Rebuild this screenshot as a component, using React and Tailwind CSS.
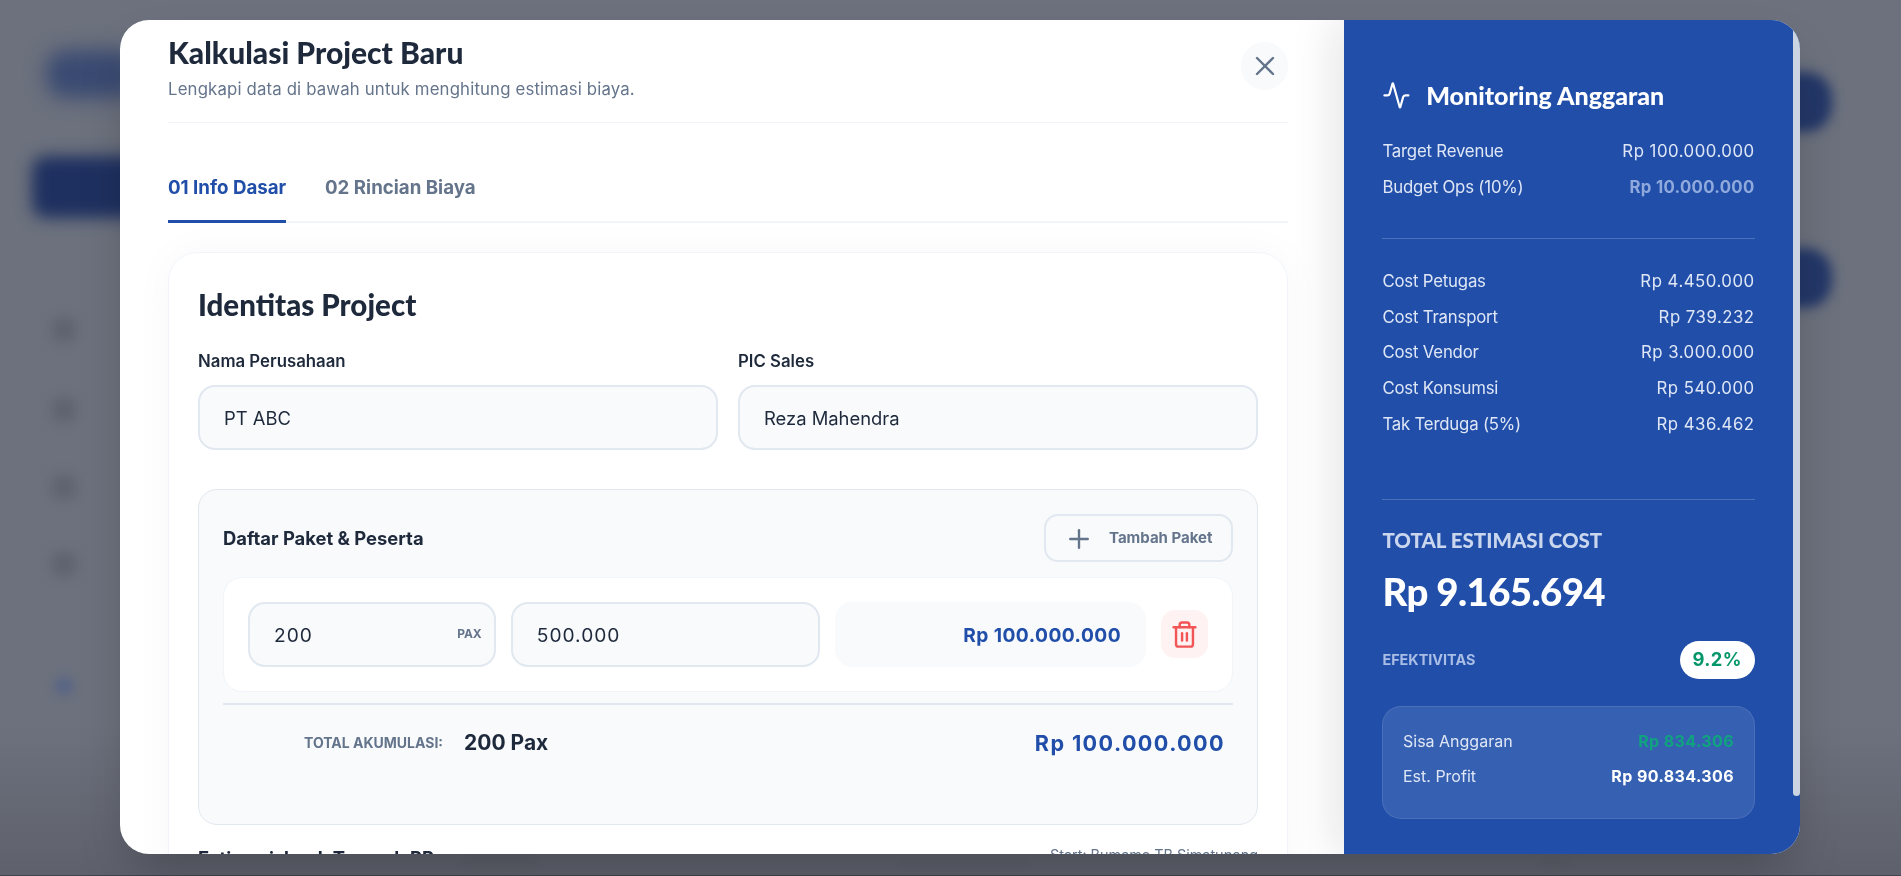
import React from "react";
import { Activity, Plus, Trash2, X } from "lucide-react";

const heading = "[font-family:Lato,sans-serif]";

const budgetRows = [
  { label: "Target Revenue", value: "Rp 100.000.000" },
  { label: "Budget Ops (10%)", value: "Rp 10.000.000", muted: true },
];

const costRows = [
  { label: "Cost Petugas", value: "Rp 4.450.000" },
  { label: "Cost Transport", value: "Rp 739.232" },
  { label: "Cost Vendor", value: "Rp 3.000.000" },
  { label: "Cost Konsumsi", value: "Rp 540.000" },
  { label: "Tak Terduga (5%)", value: "Rp 436.462" },
];

const SummaryRow = ({ label, value, muted }) => (
  <div className="flex items-center justify-between text-[16.8px] leading-[24px] text-[#dfe7f6]">
    <span className="tracking-[-0.2px]">{label}</span>
    <span className={muted ? "font-bold tracking-[0.3px] text-[#8fa9dd]" : "tracking-[0.5px]"}>{value}</span>
  </div>
);

const Field = ({ label, value }) => (
  <div className="flex-1">
    <label className="block text-[16.8px] font-semibold leading-[20px] text-[#1e293b]">{label}</label>
    <div className="mt-[14px] flex h-[65.4px] items-center rounded-[17px] border-2 border-[#e2e8f0] bg-[#f8fafc] px-[24px] pt-[2px] text-[18.4px] text-[#1e293b]">
      {value}
    </div>
  </div>
);

const Backdrop = () => (
  <div className="absolute inset-0 overflow-hidden bg-[#6c717d]">
    <div className="absolute left-[46px] top-[50px] h-[48px] w-[90px] rounded-[20px] bg-[#3a4a72] blur-[10px]" />
    <div className="absolute left-[32px] top-[156px] h-[62px] w-[120px] rounded-[14px] bg-[#1e3060] blur-[8px]" />
    <div className="absolute left-[52px] top-[318px] h-[24px] w-[24px] rounded-md bg-[#5f636f] blur-[6px]" />
    <div className="absolute left-[52px] top-[398px] h-[24px] w-[24px] rounded-md bg-[#5f636f] blur-[6px]" />
    <div className="absolute left-[52px] top-[475px] h-[24px] w-[24px] rounded-md bg-[#5f636f] blur-[6px]" />
    <div className="absolute left-[52px] top-[552px] h-[24px] w-[24px] rounded-md bg-[#5f636f] blur-[6px]" />
    <div className="absolute left-[54px] top-[676px] h-[20px] w-[20px] rounded-full bg-[#5a6685] blur-[4px]" />
    <div className="absolute left-[1760px] top-[72px] h-[60px] w-[72px] rounded-[26px] bg-[#233768] blur-[6px]" />
    <div className="absolute left-[1760px] top-[248px] h-[60px] w-[72px] rounded-[26px] bg-[#233768] blur-[6px]" />
    <div className="absolute left-[460px] top-[856px] h-[14px] w-[80px] rounded-full bg-[#4d505c] blur-[4px]" />
    <div className="absolute left-[900px] top-[858px] h-[12px] w-[130px] rounded-full bg-[#525562] blur-[4px]" />
    <div className="absolute left-[1540px] top-[858px] h-[12px] w-[30px] rounded-full bg-[#4d505c] blur-[4px]" />
    <div className="absolute bottom-0 left-0 h-[150px] w-full bg-gradient-to-b from-transparent to-[#5e616c]" />
    <div className="absolute bottom-0 left-0 h-[1px] w-full bg-[#3f4450]" />
  </div>
);

export default function App() {
  return (
    <div className="relative h-[876px] overflow-hidden [font-family:Inter,sans-serif]">
      <Backdrop />

      <div className="fixed inset-0 flex pl-[120px] pt-[20px]">
        <div className="flex h-[834px] w-[1680px] overflow-hidden rounded-[29px] bg-white shadow-[0_25px_50px_-12px_rgba(0,0,0,0.25)]">
          {/* form */}
          <div className="flex-1 overflow-hidden pl-[48px] pr-[56px]">
            <div className="flex items-start justify-between border-b border-[#f1f5f9] pb-[21px] pt-[14px]">
              <div>
                <h1 className={`${heading} text-[30px] font-black leading-[36px] text-[#1e293b]`}>Kalkulasi Project Baru</h1>
                <p className="mt-[7px] text-[16.8px] leading-[24px] tracking-[0.15px] text-[#64748b]">
                  Lengkapi data di bawah untuk menghitung estimasi biaya.
                </p>
              </div>
              <button className="mt-[8px] flex h-[48px] w-[47px] items-center justify-center rounded-full bg-[#f8fafc] text-[#64748b]">
                <X size={32} strokeWidth={1.8} />
              </button>
            </div>

            <div className="mt-[53px] flex gap-[39px] border-b-2 border-[#f1f5f9] text-[18.7px] font-bold leading-[24px]">
              <button className="-mb-[2px] w-[118px] whitespace-nowrap border-b-[3px] border-[#204ea9] pb-[20px] text-left text-[#204ea9]">01 Info Dasar</button>
              <button className="self-start pb-[20px] text-[#64748b]">02 Rincian Biaya</button>
            </div>

            <div className="mt-[29px] rounded-[29px] border border-[#f1f5f9] px-[29px] pb-[40px] pt-[36px] shadow-[0_0_40px_rgba(15,23,42,0.035)]">
              <h2 className={`${heading} text-[29.5px] font-black leading-[32px] text-[#1e293b]`}>Identitas Project</h2>

              <div className="mt-[30px] flex gap-[20px]">
                <Field label="Nama Perusahaan" value="PT ABC" />
                <Field label="PIC Sales" value="Reza Mahendra" />
              </div>

              <div className="mt-[39px] rounded-[19px] border border-[#e2e8f0] bg-[#f8fafc] px-[24px] pb-[63px] pt-[24px]">
                <div className="flex items-center justify-between">
                  <h3 className="pt-[2px] text-[18.4px] font-bold text-[#1e293b]">Daftar Paket &amp; Peserta</h3>
                  <button className="flex h-[47.4px] w-[189px] items-center gap-[15px] rounded-[14px] border-2 border-[#e2e8f0] pl-[18px] pt-[1px] text-[15px] font-bold text-[#64748b]">
                    <Plus size={30} strokeWidth={1.9} />
                    Tambah Paket
                  </button>
                </div>

                <div className="mt-[15px] flex items-center gap-[15px] rounded-[19px] border border-[#f1f5f9] bg-white p-[24px]">
                  <div className="flex h-[65.4px] w-[248px] items-center justify-between rounded-[17px] border-2 border-[#e2e8f0] bg-[#f8fafc] pl-[24px] pr-[12px] text-[#1e293b]">
                    <span className="pt-[2px] text-[19.2px] tracking-[1px]">200</span>
                    <span className="text-[12px] font-bold text-[#64748b]">PAX</span>
                  </div>
                  <div className="flex h-[65.4px] w-[310px] items-center rounded-[17px] border-2 border-[#e2e8f0] bg-[#f8fafc] px-[24px] pt-[2px] text-[19.2px] tracking-[1px] text-[#1e293b]">
                    500.000
                  </div>
                  <div className="flex h-[65.4px] w-[311px] items-center justify-end rounded-[17px] bg-[#f8fafc] pl-[26px] pr-[25px] pt-[2px] text-[19.2px] font-bold tracking-[0.45px] text-[#204ea9]">
                    Rp 100.000.000
                  </div>
                  <button className="flex h-[48px] w-[47px] items-center justify-center rounded-[14px] bg-[#fef2f2] text-[#f25555]">
                    <Trash2 size={29} strokeWidth={2} />
                  </button>
                </div>

                <div className="mt-[11px] border-t-2 border-[#e2e8f0] pt-[20px]">
                  <div className="flex items-center pl-[81px] pr-[8px] leading-[36px]">
                    <span className="text-[14px] font-bold text-[#64748b]">TOTAL AKUMULASI:</span>
                    <span className="ml-[21px] text-[21px] font-bold text-[#1e293b]">200 Pax</span>
                    <span className="ml-auto text-[21.6px] font-bold tracking-[1.4px] text-[#204ea9]">Rp 100.000.000</span>
                  </div>
                </div>
              </div>

              <div className="mt-[21px] flex items-start justify-between">
                <h3 className="text-[18.4px] font-bold leading-[24px] text-[#1e293b]">Estimasi Jarak Tempuh PP</h3>
                <span className="-mt-[3px] text-[14.4px] leading-[24px] text-[#64748b]">Start: Bumame TB Simatupang</span>
              </div>
            </div>
          </div>

          {/* summary */}
          <aside className="relative z-10 w-[456px] shrink-0 bg-[#204ea9] pl-[38.4px] pr-[45.4px] pt-[59px] text-white shadow-[-12px_0_40px_rgba(15,23,42,0.1)]">
            <div className="absolute right-0 top-0 h-[776px] w-[7px] rounded-b-full bg-[#cbd5e1]" />

            <div className="flex items-center gap-[15px]">
              <Activity size={28.8} strokeWidth={1.8} />
              <h2 className={`${heading} text-[25px] font-black leading-[32px]`}>Monitoring Anggaran</h2>
            </div>

            <div className="mt-[28px] flex flex-col gap-[12px]">
              {budgetRows.map((row) => (
                <SummaryRow key={row.label} {...row} />
              ))}
            </div>

            <div className="mt-[39px] border-t border-white/20 pt-[30px]">
              <div className="flex flex-col gap-[11.7px]">
                {costRows.map((row) => (
                  <SummaryRow key={row.label} {...row} />
                ))}
              </div>
            </div>

            <div className="mt-[63px] border-t border-white/20 pt-[26px]">
              <div className={`${heading} text-[20.5px] font-black leading-[28px] text-[#c9d6ee]`}>TOTAL ESTIMASI COST</div>
              <div className={`${heading} mt-[13px] text-[38.4px] font-black leading-[48px] tracking-[-0.6px]`}>Rp 9.165.694</div>

              <div className="mt-[26px] flex items-center justify-between">
                <span className="text-[14.4px] font-bold text-[#a9bde6]">EFEKTIVITAS</span>
                <span className="flex h-[38px] w-[75px] items-center justify-center rounded-full bg-white text-[18.4px] font-bold tracking-[0.4px] text-[#059669]">
                  9.2%
                </span>
              </div>

              <div className="mt-[27px] rounded-[19px] border border-white/10 bg-white/10 px-[19.6px] pb-[30px] pt-[22px] text-[16px] leading-[24px]">
                <div className="flex items-center justify-between text-[#dfe7f6]">
                  <span>Sisa Anggaran</span>
                  <span className="font-bold tracking-[0.4px] text-[#10a37f]">Rp 834.306</span>
                </div>
                <div className="mt-[11px] flex items-center justify-between text-[#dfe7f6]">
                  <span>Est. Profit</span>
                  <span className="font-bold tracking-[0.4px] text-white">Rp 90.834.306</span>
                </div>
              </div>
            </div>
          </aside>
        </div>
      </div>
    </div>
  );
}
